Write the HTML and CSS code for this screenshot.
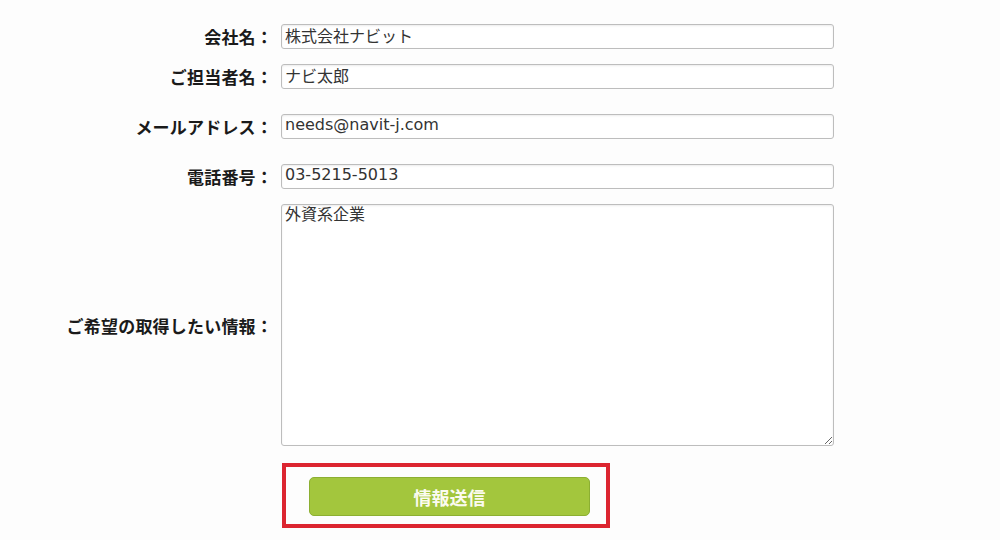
FILE: index.html
```html
<!DOCTYPE html>
<html lang="ja">
<head>
    <meta charset="UTF-8">
    <meta name="viewport" content="width=device-width, initial-scale=1.0">
    <title>お問い合わせフォーム</title>
    <link rel="stylesheet" href="styles.css">
</head>
<body>
    <form class="contact-form">
        <div class="form-row">
            <label class="form-label" for="company">会社名：</label>
            <input class="form-input" id="company" type="text" value="株式会社ナビット">
        </div>
        <div class="form-row row-near">
            <label class="form-label" for="person">ご担当者名：</label>
            <input class="form-input" id="person" type="text" value="ナビ太郎">
        </div>
        <div class="form-row row-far">
            <label class="form-label" for="mail">メールアドレス：</label>
            <input class="form-input" id="mail" type="text" value="needs@navit-j.com">
        </div>
        <div class="form-row row-far">
            <label class="form-label" for="tel">電話番号：</label>
            <input class="form-input" id="tel" type="text" value="03-5215-5013">
        </div>
        <div class="form-row row-near">
            <label class="form-label" for="wish">ご希望の取得したい情報：</label>
            <textarea class="form-textarea" id="wish">外資系企業</textarea>
        </div>
        <div class="form-row row-submit">
            <span></span>
            <div class="submit-frame">
                <button type="button" class="submit-button">情報送信</button>
            </div>
        </div>
    </form>
</body>
</html>
```

FILE: styles.css
```css
* {
    box-sizing: border-box;
    margin: 0;
    padding: 0;
}
body {
    font-family: "Noto Sans CJK JP", "Noto Sans", sans-serif;
    background-color: #fdfdfd;
    color: #222;
    width: 1000px;
    height: 540px;
    overflow: hidden;
}
.contact-form {
    padding-top: 24px;
}
.form-row {
    display: grid;
    grid-template-columns: 273px 553px;
    column-gap: 8px;
    align-items: center;
}
.row-near {
    margin-top: 15px;
}
.row-far {
    margin-top: 25px;
}
.row-submit {
    margin-top: 17px;
}
.form-label {
    text-align: right;
    font-weight: bold;
    font-size: 17px;
    color: #1a1a1a;
    white-space: nowrap;
    letter-spacing: 0.2px;
}
.form-input,
.form-textarea {
    font-family: "DejaVu Sans", "Noto Sans CJK JP", sans-serif;
    font-size: 16px;
    color: #333;
    background-color: #fff;
    border: 1px solid #bdbdbd;
    border-radius: 3px;
    box-shadow: inset 0 1px 2px rgba(0,0,0,0.08);
    padding: 0 3px 4px;
    outline: none;
}
.form-input {
    height: 25px;
}
.form-textarea {
    height: 242px;
    line-height: 20px;
    padding-top: 0;
    resize: both;
}
.submit-frame {
    width: 328px;
    height: 65px;
    margin-left: 1px;
    border: 4px solid #dc2530;
    padding: 10px 0 0 23px;
}
.submit-button {
    width: 281px;
    height: 39px;
    background-color: #a3c63d;
    border: 1px solid #8caf32;
    border-radius: 5px;
    color: #fbfbf0;
    font-family: "Noto Sans CJK JP", sans-serif;
    font-weight: bold;
    font-size: 18px;
    cursor: pointer;
}
```
